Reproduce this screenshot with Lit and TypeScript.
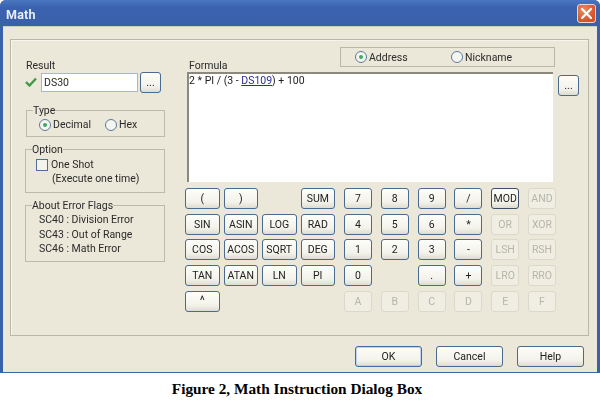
import { LitElement, html, css } from "lit";
import { customElement } from "lit/decorators.js";

const LEFT_ROWS = [
  ["(", ")", "", "SUM"],
  ["SIN", "ASIN", "LOG", "RAD"],
  ["COS", "ACOS", "SQRT", "DEG"],
  ["TAN", "ATAN", "LN", "PI"],
  ["^", "", "", ""],
];
const RIGHT_ROWS = [
  ["7", "8", "9", "/", "MOD", "AND"],
  ["4", "5", "6", "*", "OR", "XOR"],
  ["1", "2", "3", "-", "LSH", "RSH"],
  ["0", "", ".", "+", "LRO", "RRO"],
  ["A", "B", "C", "D", "E", "F"],
];
const DISABLED = new Set(["AND", "OR", "XOR", "LSH", "RSH", "LRO", "RRO", "A", "B", "C", "D", "E", "F"]);

@customElement("app-root")
export class AppRoot extends LitElement {
  static styles = css`
    :host {
      display: block;
      width: 600px;
      height: 407px;
      background: #fff;
      overflow: hidden;
      font-family: Roboto, "Liberation Sans", sans-serif;
      font-size: 10.5px;
      color: #2a2a2a;
    }
    * { box-sizing: border-box; }
    .window {
      width: 600px;
      height: 373px;
      display: flex;
      flex-direction: column;
      background: #3b61ab;
      border-radius: 6px 6px 0 0;
      padding: 0 3px 1px 3px;
      filter: blur(0.3px);
    }
    .titlebar {
      height: 26px;
      flex: none;
      display: flex;
      align-items: center;
      justify-content: space-between;
      background: linear-gradient(#4a76bf, #3a62ae 30%, #3a60aa);
      margin: 0 -3px;
      padding: 2px 4px 0 6px;
      border-radius: 6px 6px 0 0;
    }
    .title { color: #e8eef8; font-size: 12.5px; font-weight: 700; letter-spacing: 0.2px; }
    .close {
      width: 19px; height: 19px;
      margin-top: -1px;
      border: 1px solid #e9d8cf;
      border-radius: 3px;
      background: radial-gradient(circle at 35% 30%, #ee8a62, #d9502a 70%);
      display: flex; align-items: center; justify-content: center;
    }
    .client {
      flex: 1;
      background: #ebe8d9;
      padding: 12px 8px 0 7px;
      display: flex;
      flex-direction: column;
      border-top: 1px solid #cfcdbb;
    }
    .group {
      height: 297px;
      flex: none;
      border: 1px solid #b9b8a6;
      box-shadow: inset 1px 1px 0 #f6f5ec;
      display: flex;
      padding: 7px 0 0 14px;
    }
    .left { width: 140px; flex: none; display: flex; flex-direction: column; }
    .right { flex: 1; display: flex; flex-direction: column; padding-left: 22px; min-width: 0; }
    .label { line-height: 13px; }
    .result-label { margin-top: 12px; margin-left: 1px; }
    .result-row { display: flex; align-items: center; margin-top: -1px; height: 22px; }
    .check { width: 16px; flex: none; display: flex; }
    .input {
      width: 97px; height: 19px;
      border: 1px solid #a8b8cc;
      background: #fff;
      padding-left: 2px;
      line-height: 17px;
    }
    .btn {
      display: flex; align-items: center; justify-content: center;
      border: 1.5px solid #4a6a8e;
      border-radius: 3px;
      background: linear-gradient(#fdfdfa, #f3f2ea 70%, #dedcd0);
      color: #222;
      font-family: inherit;
      font-size: 10.5px;
      padding: 0;
      height: 21px;
    }
    .more { width: 21px; margin-left: 2px; }
    fieldset {
      margin: 0; padding: 0;
      border: 1px solid #bcbba9;
      min-width: 0;
    }
    legend { padding: 0; margin-left: 6px; line-height: 13px; background: #ebe8d9; }
    .type { margin-top: 11px; margin-left: 1px; height: 33px; }
    .radios { display: flex; padding-left: 12px; height: 15px; align-items: center; }
    .radio { display: flex; align-items: center; gap: 2px; }
    .r {
      width: 12px; height: 12px; border-radius: 50%;
      border: 1px solid #5a7a9c;
      background: #f6f6f0;
      display: flex; align-items: center; justify-content: center;
      flex: none;
    }
    .r.on::after { content: ""; width: 4px; height: 4px; border-radius: 50%; background: #3fa860; }
    .decimal { width: 66px; }
    .option { margin-top: 6px; height: 50px; }
    .one { display: flex; align-items: center; gap: 3px; padding-left: 10px; height: 15px; margin-top: 1px; }
    .box { width: 12px; height: 12px; border: 1px solid #4f6f94; background: #f4f3ec; flex: none; }
    .exec { padding-left: 26px; line-height: 13px; }
    .about { margin-top: 6px; height: 63px; padding-top: 1px; }
    .about div { padding-left: 13px; line-height: 14.7px; }
    .top { display: flex; height: 26px; }
    .formula-label { margin-top: 12px; margin-left: 2px; width: 150px; }
    .mode {
      margin-left: 1px;
      width: 215px; height: 20px;
      border: 1px solid #b9b8a6;
      display: flex; align-items: center;
      padding-left: 14px;
    }
    .addr { width: 96px; }
    .formula-row { display: flex; margin-top: -1px; }
    .formula {
      width: 366px; height: 110px;
      background: #fff;
      border-top: 2px solid #8a897c;
      border-left: 2px solid #8a897c;
      padding: 0;
      line-height: 13px;
      font-size: 10.5px;
      color: #222;
    }
    .ds { color: #2b2f8f; text-decoration: underline; }
    .more2 { margin: 3px 0 0 5px; width: 21px; }
    .keys { display: flex; margin-top: 6px; margin-left: -2px; }
    .pad { display: grid; row-gap: 4.7px; grid-auto-rows: 21px; }
    .pad-l { grid-template-columns: repeat(4, 34.5px); column-gap: 4px; }
    .pad-r { grid-template-columns: repeat(6, 28px); column-gap: 8.8px; margin-left: 9px; }
    .btn.off {
      color: #b6b5a8;
      border: 1px solid #dbd9ca;
      background: #f0eee3;
    }
    .btn.strong { border-color: #3c4f66; }
    .caret { font-size: 12px; line-height: 14px; }
    .footer {
      flex: 1;
      display: flex; align-items: center; justify-content: flex-end;
      gap: 14px;
      padding: 5px 5px 0 0;
    }
    .fbtn { width: 67px; height: 21px; }
    .fbtn.default { border-color: #3f6ba6; box-shadow: inset 0 0 0 1px #bcd2ee; }
    .caption {
      text-align: center;
      font-family: "Liberation Serif", serif;
      font-weight: 700;
      font-size: 15.3px;
      color: #000;
      line-height: 17px;
      margin-top: 7px;
      width: 594px;
    }
  `;

  private renderKey(k: string) {
    if (!k) return html`<span></span>`;
    const off = DISABLED.has(k);
    const cls = `btn${off ? " off" : ""}${k === "MOD" ? " strong" : ""}${k === "^" ? " caret" : ""}`;
    return html`<button class=${cls}>${k}</button>`;
  }

  render() {
    return html`
      <div class="window">
        <div class="titlebar">
          <span class="title">Math</span>
          <span class="close">
            <svg width="13" height="13" viewBox="0 0 13 13"><path d="M2 2 L11 11 M11 2 L2 11" stroke="#fff" stroke-width="2.2" stroke-linecap="round"/></svg>
          </span>
        </div>
        <div class="client">
          <div class="group">
            <div class="left">
              <div class="label result-label">Result</div>
              <div class="result-row">
                <span class="check">
                  <svg width="12" height="10" viewBox="0 0 12 10"><path d="M1 5 L4.5 8.5 L11 1.5" fill="none" stroke="#3f9a4a" stroke-width="2.4"/></svg>
                </span>
                <div class="input">DS30</div>
                <button class="btn more">...</button>
              </div>
              <fieldset class="type">
                <legend>Type</legend>
                <div class="radios">
                  <span class="radio decimal"><span class="r on"></span>Decimal</span>
                  <span class="radio"><span class="r"></span>Hex</span>
                </div>
              </fieldset>
              <fieldset class="option">
                <legend>Option</legend>
                <div class="one"><span class="box"></span>One Shot</div>
                <div class="exec">(Execute one time)</div>
              </fieldset>
              <fieldset class="about">
                <legend>About Error Flags</legend>
                <div>SC40 : Division Error</div>
                <div>SC43 : Out of Range</div>
                <div>SC46 : Math Error</div>
              </fieldset>
            </div>
            <div class="right">
              <div class="top">
                <div class="label formula-label">Formula</div>
                <div class="mode">
                  <span class="radio addr"><span class="r on"></span>Address</span>
                  <span class="radio"><span class="r"></span>Nickname</span>
                </div>
              </div>
              <div class="formula-row">
                <div class="formula">2 * PI / (3 - <span class="ds">DS109</span>) + 100</div>
                <button class="btn more2">...</button>
              </div>
              <div class="keys">
                <div class="pad pad-l">${LEFT_ROWS.flat().map((k) => this.renderKey(k))}</div>
                <div class="pad pad-r">${RIGHT_ROWS.flat().map((k) => this.renderKey(k))}</div>
              </div>
            </div>
          </div>
          <div class="footer">
            <button class="btn fbtn default">OK</button>
            <button class="btn fbtn">Cancel</button>
            <button class="btn fbtn">Help</button>
          </div>
        </div>
      </div>
      <div class="caption">Figure 2, Math Instruction Dialog Box</div>
    `;
  }
}
